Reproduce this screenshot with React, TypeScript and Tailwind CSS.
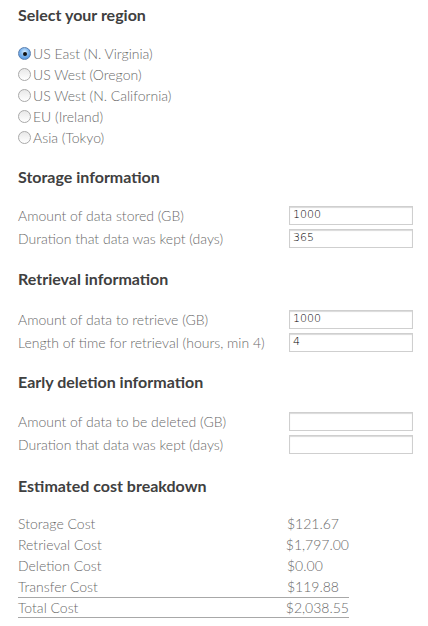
import React from "react";

const regions = [
  "US East (N. Virginia)",
  "US West (Oregon)",
  "US West (N. California)",
  "EU (Ireland)",
  "Asia (Tokyo)",
];

function Radio({ checked }: { checked: boolean }) {
  return checked ? (
    <span className="flex h-[13px] w-[13px] shrink-0 items-center justify-center rounded-full border border-[#5a7fb0] bg-[radial-gradient(circle_at_50%_35%,#d6ecff_0%,#7fb6ee_45%,#3f86d8_100%)]">
      <span className="h-[4px] w-[4px] rounded-full bg-[#111]" />
    </span>
  ) : (
    <span className="h-[13px] w-[13px] shrink-0 rounded-full border border-[#a9a9a9] bg-[linear-gradient(#e8e8e8,#ffffff)]" />
  );
}

function Heading({ children, className = "" }: { children: React.ReactNode; className?: string }) {
  return (
    <h2 className={`flex h-[30px] items-center text-[16px] font-bold text-[#404040] ${className}`}>
      {children}
    </h2>
  );
}

function InputRow({ label, value }: { label: string; value: string }) {
  return (
    <div className="flex h-[23px] items-center">
      <span className="w-[271px] shrink-0">{label}</span>
      <div className="flex h-[19px] w-[124px] items-center border border-[#cfcfcf] bg-white pl-[3px] shadow-[inset_0_1px_1px_rgba(0,0,0,0.15)] text-[11px] text-black [font-family:'DejaVu_Sans',sans-serif]">
        {value}
      </div>
    </div>
  );
}

export default function App() {
  const costs = [
    ["Storage Cost", "$121.67"],
    ["Retrieval Cost", "$1,797.00"],
    ["Deletion Cost", "$0.00"],
    ["Transfer Cost", "$119.88"],
  ];
  return (
    <div className="min-h-[626px] w-[428px] bg-white pl-[18px] text-[14px] font-light text-[#6a6a6a] [font-family:Lato,'Liberation_Sans',sans-serif]">
      <Heading>Select your region</Heading>
      <div className="mt-[13px] flex flex-col">
        {regions.map((r, i) => (
          <label key={r} className="flex h-[21px] items-center gap-[2px]">
            <Radio checked={i === 0} />
            <span>{r}</span>
          </label>
        ))}
      </div>

      <Heading className="mt-[14px]">Storage information</Heading>
      <div className="mt-[12px]">
        <InputRow label="Amount of data stored (GB)" value="1000" />
        <InputRow label="Duration that data was kept (days)" value="365" />
      </div>

      <Heading className="mt-[14px]">Retrieval information</Heading>
      <div className="mt-[14px]">
        <InputRow label="Amount of data to retrieve (GB)" value="1000" />
        <InputRow label="Length of time for retrieval (hours, min 4)" value="4" />
      </div>

      <Heading className="mt-[13px]">Early deletion information</Heading>
      <div className="mt-[13px]">
        <InputRow label="Amount of data to be deleted (GB)" value="" />
        <InputRow label="Duration that data was kept (days)" value="" />
      </div>

      <Heading className="mt-[15px]">Estimated cost breakdown</Heading>
      <div className="mt-[12px] w-[331px]">
        {costs.map(([k, v]) => (
          <div key={k} className="flex h-[21px] items-center">
            <span className="w-[269px]">{k}</span>
            <span>{v}</span>
          </div>
        ))}
        <div className="flex h-[21px] items-center border-y border-[#a8a8a8]">
          <span className="w-[269px]">Total Cost</span>
          <span>$2,038.55</span>
        </div>
      </div>
    </div>
  );
}
